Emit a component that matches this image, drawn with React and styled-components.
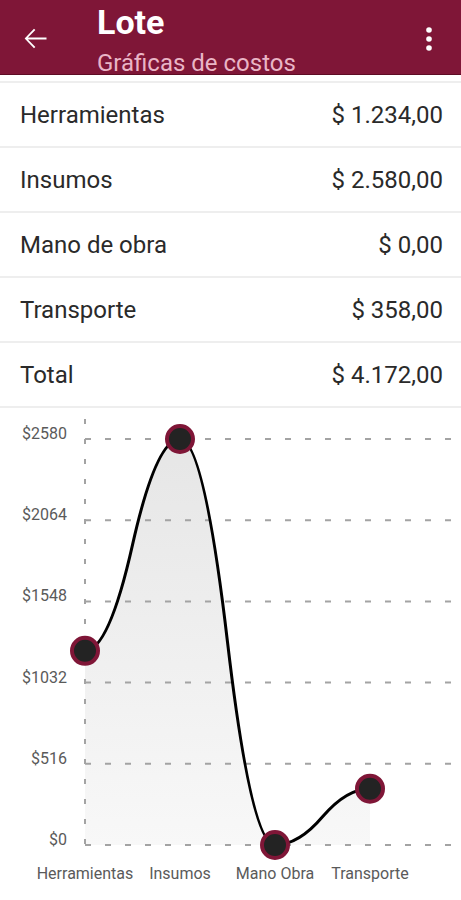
import React from 'react'
import styled, { createGlobalStyle } from 'styled-components'

const GlobalStyle = createGlobalStyle`
  html, body {
    margin: 0;
    padding: 0;
    background: #fff;
    font-family: Roboto, "Noto Sans", sans-serif;
  }
`

const MAROON = '#7f1637'

const Screen = styled.div`
  width: 461px;
  height: 900px;
  overflow: hidden;
  background: #fff;
`

const Header = styled.header`
  height: 74px;
  background: ${MAROON};
  border-bottom: 1px solid #5e0c24;
  display: flex;
  align-items: flex-start;
  padding: 0 16px 0 19px;
  color: #fff;
`

const IconButton = styled.div`
  width: 33px;
  height: 33px;
  display: flex;
  align-items: center;
  justify-content: center;
  margin-top: 22px;
`

const Titles = styled.div`
  flex: 1;
  display: flex;
  flex-direction: column;
  margin-left: 45px;
  padding-top: 1px;
`

const Title = styled.div`
  font-size: 34px;
  font-weight: 700;
  line-height: 42px;
`

const Subtitle = styled.div`
  font-size: 24px;
  line-height: 28px;
  margin-top: 6px;
  color: #eab5c6;
`

const List = styled.div`
  margin-top: 6px;
  border-top: 2px solid #eeeeee;
`

const Row = styled.div`
  height: 63px;
  border-bottom: 2px solid #eeeeee;
  display: flex;
  align-items: center;
  justify-content: space-between;
  padding: 0 18px 0 20px;
  font-size: 24px;
  color: #2a2a2a;
`

const ChartWrap = styled.div`
  height: 493px;
`

const rows = [
  ['Herramientas', '$ 1.234,00'],
  ['Insumos', '$ 2.580,00'],
  ['Mano de obra', '$ 0,00'],
  ['Transporte', '$ 358,00'],
  ['Total', '$ 4.172,00'],
]

const data = [
  { label: 'Herramientas', value: 1234 },
  { label: 'Insumos', value: 2580 },
  { label: 'Mano Obra', value: 0 },
  { label: 'Transporte', value: 358 },
]

// chart coordinates are local to the svg (top = 407 on the page)
const X0 = 85
const STEP_X = 95
const TOP = 31
const BOTTOM = 437
const MAX = 2580

const px = (i) => X0 + i * STEP_X
const py = (v) => BOTTOM - (v / MAX) * (BOTTOM - TOP)

const linePath = () => {
  let d = `M${px(0)},${py(data[0].value)}`
  for (let i = 0; i < data.length - 1; i++) {
    const x1 = px(i)
    const y1 = py(data[i].value)
    const x2 = px(i + 1)
    const y2 = py(data[i + 1].value)
    const xm = (x1 + x2) / 2
    const ym = (y1 + y2) / 2
    d += ` Q${(xm + x1) / 2},${y1} ${xm},${ym}`
    d += ` Q${(xm + x2) / 2},${y2} ${x2},${y2}`
  }
  return d
}

const Chart = () => {
  const d = linePath()
  const fill = `${d} L${px(data.length - 1)},${BOTTOM} L${X0},${BOTTOM} Z`
  const ticks = [0, 1, 2, 3, 4, 5].map((k) => ({
    y: BOTTOM - (k * (BOTTOM - TOP)) / 5,
    label: '$' + Math.round((k * MAX) / 5),
  }))
  return (
    <svg width="461" height="493" viewBox="0 0 461 493">
      <defs>
        <linearGradient id="area" x1="0" y1="0" x2="0" y2="1">
          <stop offset="0" stopColor="#e6e6e6" />
          <stop offset="1" stopColor="#f8f8f8" />
        </linearGradient>
      </defs>
      <path d={fill} fill="url(#area)" />
      <line x1={X0} y1={11} x2={X0} y2={BOTTOM} stroke="#a3a3a3" strokeWidth="2" strokeDasharray="5 15" />
      {ticks.map((t) => (
        <g key={t.label}>
          <line x1={X0} y1={t.y} x2={470} y2={t.y} stroke="#a3a3a3" strokeWidth="2" strokeDasharray="6 14" />
          <text x={67} y={t.y} textAnchor="end" fontSize="16" fill="#5a5a5a" fontFamily="Roboto, sans-serif">
            {t.label}
          </text>
        </g>
      ))}
      <path d={d} fill="none" stroke="#000" strokeWidth="3" />
      {data.map((p, i) => (
        <circle key={p.label} cx={px(i)} cy={py(p.value)} r="13" fill="#232323" stroke={MAROON} strokeWidth="4" />
      ))}
      {data.map((p, i) => (
        <text key={p.label} x={px(i)} y={471} textAnchor="middle" fontSize="16" fill="#5a5a5a" fontFamily="Roboto, sans-serif">
          {p.label}
        </text>
      ))}
    </svg>
  )
}

export default function App() {
  return (
    <Screen>
      <GlobalStyle />
      <Header>
        <IconButton>
          <svg width="33" height="33" viewBox="0 0 24 24" fill="#fff">
            <path d="M20 11.3H6.5l5.4-5.4-1-1L4.1 12l6.8 7.1 1-1-5.4-5.4H20z" />
          </svg>
        </IconButton>
        <Titles>
          <Title>Lote</Title>
          <Subtitle>Gráficas de costos</Subtitle>
        </Titles>
        <IconButton>
          <svg width="24" height="24" viewBox="0 0 24 24" fill="#fff">
            <circle cx="12" cy="3" r="2.8" />
            <circle cx="12" cy="12" r="2.8" />
            <circle cx="12" cy="21" r="2.8" />
          </svg>
        </IconButton>
      </Header>
      <List>
        {rows.map(([name, amount]) => (
          <Row key={name}>
            <span>{name}</span>
            <span>{amount}</span>
          </Row>
        ))}
      </List>
      <ChartWrap>
        <Chart />
      </ChartWrap>
    </Screen>
  )
}
